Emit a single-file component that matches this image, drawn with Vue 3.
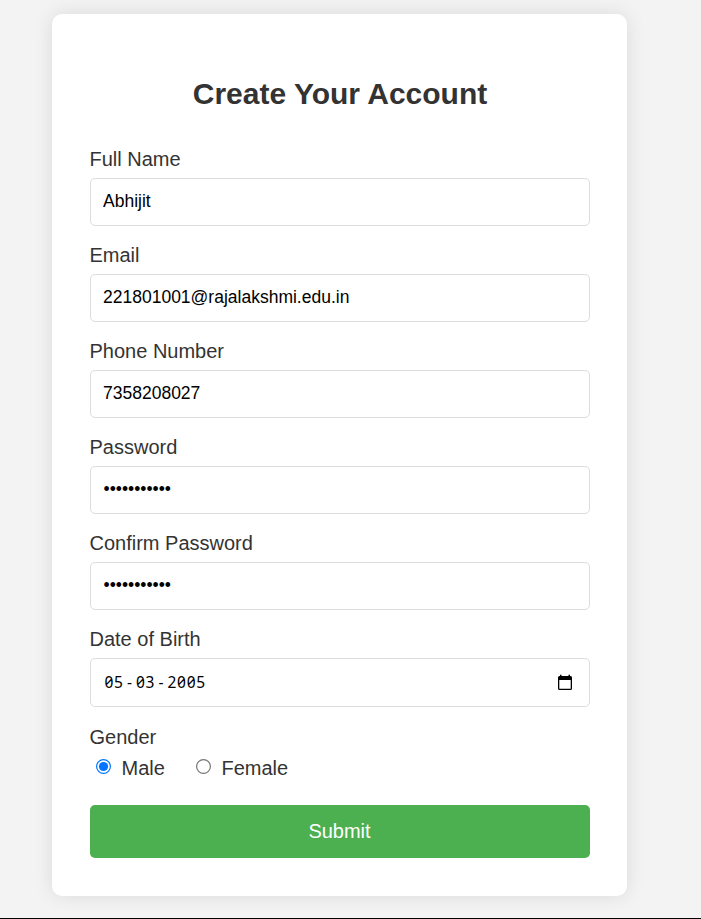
<script setup>
import { ref } from 'vue'

const fields = ref([
  { id: 'name', label: 'Full Name', type: 'text', value: 'Abhijit' },
  { id: 'email', label: 'Email', type: 'text', value: '221801001@rajalakshmi.edu.in' },
  { id: 'phone', label: 'Phone Number', type: 'tel', value: '7358208027' },
  { id: 'password', label: 'Password', type: 'password', value: 'abcdefghijk' },
  { id: 'confirm', label: 'Confirm Password', type: 'password', value: 'abcdefghijk' },
])
const gender = ref('Male')
</script>

<template>
  <main class="page">
    <form class="card" @submit.prevent>
      <h2 class="title">Create Your Account</h2>
      <div v-for="f in fields" :key="f.id" class="field">
        <label class="label" :for="f.id">{{ f.label }}</label>
        <input :id="f.id" v-model="f.value" class="control" :class="{ secret: f.type === 'password' }" :type="f.type" />
      </div>
      <div class="field">
        <span class="label">Date of Birth</span>
        <div class="control date">
          <div class="parts">
            <span>05</span><span class="sep">-</span><span>03</span><span class="sep">-</span><span>2005</span>
          </div>
          <svg class="calendar" width="16" height="18" viewBox="0 0 16 18">
            <path
              fill="#000"
              fill-rule="evenodd"
              d="M3 .8h1.500V2h7V.8H13V2h.5A1.500 1.500 0 0 1 15 3.500V14.500A1.500 1.500 0 0 1 13.500 16h-11A1.500 1.500 0 0 1 1 14.500V3.500A1.500 1.500 0 0 1 2.500 2H3ZM2.300 6v8.700h11.400V6Z"
            />
          </svg>
        </div>
      </div>
      <span class="label gender">Gender</span>
      <div class="options">
        <label v-for="g in ['Male', 'Female']" :key="g" class="option" @click="gender = g">
          <svg class="radio" width="17" height="17" viewBox="0 0 17 17">
            <circle cx="8.500" cy="8.500" r="6.900" fill="#fff" :stroke="gender === g ? '#0075ff' : '#767676'" stroke-width="1.200" />
            <circle v-if="gender === g" cx="8.500" cy="8.500" r="4.600" fill="#0075ff" />
          </svg>
          <span>{{ g }}</span>
        </label>
      </div>
      <button class="submit" type="submit">Submit</button>
    </form>
  </main>
</template>

<style>
body {
  background: #f3f3f3;
}
</style>

<style scoped>
.page {
  box-sizing: border-box;
  height: 919px;
  padding: 14px 0 0 52px;
  background: #f3f3f3;
  border-bottom: 1px solid #000;
  font-family: "Liberation Sans", Arial, sans-serif;
  color: #333;
  overflow: hidden;
}
.card {
  box-sizing: border-box;
  width: 575px;
  height: 882px;
  padding: 62px 37px 38px 38px;
  background: #fff;
  border-radius: 10px;
  box-shadow: 0 0 19px rgba(0, 0, 0, 0.1);
}
.title {
  margin: 0 0 31px;
  font-size: 30px;
  line-height: 36px;
  text-align: center;
}
.field {
  height: 96px;
}
.label {
  display: block;
  height: 35px;
  margin-left: -0.5px;
  padding-top: 5px;
  box-sizing: border-box;
  font-size: 20px;
  line-height: 23px;
}
.control {
  display: block;
  box-sizing: border-box;
  width: 500px;
  height: 48px;
  margin: 0;
  padding: 0 12px 1px;
  border: 1px solid #ddd;
  border-radius: 5px;
  background: #fff;
  color: #000;
  font-family: "Liberation Sans", Arial, sans-serif;
  font-size: 17.5px;
  outline: none;
}
.secret {
  padding-left: 12.500px;
}
.date {
  display: flex;
  align-items: center;
  justify-content: space-between;
  height: 49px;
  padding: 0 16px 0 13.500px;
}
.parts {
  display: flex;
  padding-bottom: 2px;
  font-family: "Noto Sans", sans-serif;
  font-size: 15.500px;
  letter-spacing: 0.65px;
  font-feature-settings: "zero";
}
.sep {
  width: 12.500px;
  text-align: center;
}
.gender {
  height: 30px;
  margin-top: 2px;
}
.options {
  display: flex;
  height: 54px;
  padding-left: 5px;
}
.option {
  display: flex;
  align-items: flex-start;
  gap: 9.500px;
  width: 100px;
  padding-top: 6px;
  box-sizing: border-box;
  font-size: 20px;
  line-height: 23px;
}
.radio {
  margin-top: 1px;
}
.submit {
  display: block;
  width: 500px;
  height: 53px;
  padding: 0 1px 0 0;
  border: 0;
  border-radius: 5px;
  background: #4caf50;
  color: #fff;
  font-family: inherit;
  font-size: 20px;
}
</style>
